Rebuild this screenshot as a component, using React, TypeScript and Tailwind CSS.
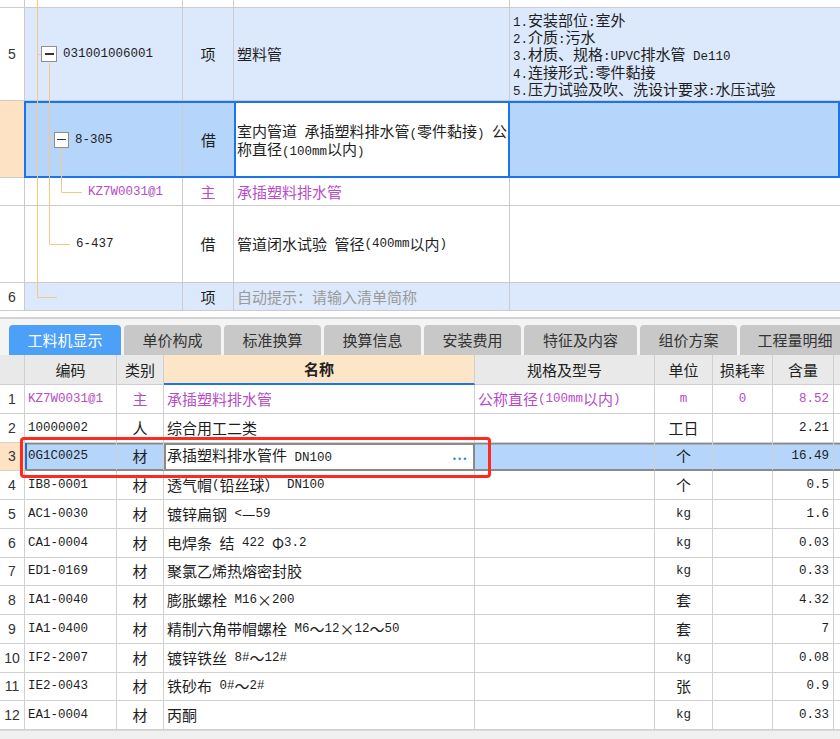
import React from "react";

function T({ s }: { s: string }) {
  const parts = s.split(/([\x20-\x7E]+)/).filter((p) => p.length > 0);
  return (
    <>
      {parts.map((p, i) =>
        /^[\x20-\x7E]+$/.test(p) ? (
          <span key={i} className="font-['Liberation_Mono',monospace] text-[12.5px] whitespace-pre">
            {p}
          </span>
        ) : (
          <span key={i}>{p}</span>
        )
      )}
    </>
  );
}

function Box({ size }: { size: "a" | "b" }) {
  return (
    <span
      className={
        (size === "a" ? "w-[16px] h-[16px] " : "w-[15px] h-[16px] ") +
        "shrink-0 border border-[#8e8e8e] bg-white flex items-center justify-center"
      }
    >
      <span className="w-[9px] h-[1.5px] bg-[#333]" />
    </span>
  );
}

type Row = {
  n: string;
  code: string;
  cat: string;
  name: string;
  spec?: string;
  unit: string;
  loss?: string;
  qty: string;
  purple?: boolean;
  sel?: boolean;
};

const rows: Row[] = [
  { n: "1", code: "KZ7W0031@1", cat: "主", name: "承插塑料排水管", spec: "公称直径(100mm以内)", unit: "m", loss: "0", qty: "8.52", purple: true },
  { n: "2", code: "10000002", cat: "人", name: "综合用工二类", unit: "工日", qty: "2.21" },
  { n: "3", code: "0G1C0025", cat: "材", name: "承插塑料排水管件 DN100", unit: "个", qty: "16.49", sel: true },
  { n: "4", code: "IB8-0001", cat: "材", name: "透气帽(铅丝球） DN100", unit: "个", qty: "0.5" },
  { n: "5", code: "AC1-0030", cat: "材", name: "镀锌扁钢 <—59", unit: "kg", qty: "1.6" },
  { n: "6", code: "CA1-0004", cat: "材", name: "电焊条 结 422 Φ3.2", unit: "kg", qty: "0.03" },
  { n: "7", code: "ED1-0169", cat: "材", name: "聚氯乙烯热熔密封胶", unit: "kg", qty: "0.33" },
  { n: "8", code: "IA1-0040", cat: "材", name: "膨胀螺栓 M16×200", unit: "套", qty: "4.32" },
  { n: "9", code: "IA1-0400", cat: "材", name: "精制六角带帽螺栓 M6～12×12～50", unit: "套", qty: "7" },
  { n: "10", code: "IF2-2007", cat: "材", name: "镀锌铁丝 8#～12#", unit: "kg", qty: "0.08" },
  { n: "11", code: "IE2-0043", cat: "材", name: "铁砂布 0#～2#", unit: "张", qty: "0.9" },
  { n: "12", code: "EA1-0004", cat: "材", name: "丙酮", unit: "kg", qty: "0.33" },
];

const tabs = [
  { t: "工料机显示", w: "w-[112px]" },
  { t: "单价构成", w: "w-[97px]" },
  { t: "标准换算", w: "w-[97px]" },
  { t: "换算信息", w: "w-[97px]" },
  { t: "安装费用", w: "w-[97px]" },
  { t: "特征及内容", w: "w-[113px]" },
  { t: "组价方案", w: "w-[97px]" },
  { t: "工程量明细", w: "w-[110px]" },
];

function BodyRow({ r }: { r: Row }) {
  const c = r.purple ? "text-[#b74cc8]" : "text-[#1e1e1e]";
  if (r.sel) {
    const sh = "shadow-[inset_0_1.5px_0_#8a8a8a] border-b-2 border-b-[#8a8a8a]";
    return (
      <div className="flex h-[28.75px]">
        <div className="w-[25px] shrink-0 border-r border-b border-[#d0d0d0] bg-[#fde3c3] flex items-center justify-center font-['Liberation_Sans',sans-serif] text-[14px] text-[#333]">
          {r.n}
        </div>
        <div className={"w-[92px] shrink-0 border-r border-[#d0d0d0] bg-[#b5d5fb] flex items-center pl-[3px] shadow-[inset_2px_0_0_#1b6fe2,inset_0_1.5px_0_#8a8a8a] border-b-2 border-b-[#8a8a8a]"}>
          <span className="font-['Liberation_Mono',monospace] text-[12.5px]">{r.code}</span>
        </div>
        <div className={"w-[47px] shrink-0 border-r border-r-[#d0d0d0] bg-[#b5d5fb] flex items-center justify-center " + sh}>{r.cat}</div>
        <div className="w-[311px] shrink-0 border-2 border-[#8a8a8a] bg-white flex items-center pl-[1px] pr-[5px]">
          <span className="flex-1 whitespace-nowrap">
            <T s={r.name} />
          </span>
          <span className="text-[#3f87d6] font-bold text-[13px] tracking-[1px] leading-none mb-[4px]">...</span>
        </div>
        <div className={"w-[180px] shrink-0 border-r border-r-[#d0d0d0] bg-[#b5d5fb] " + sh} />
        <div className={"w-[58px] shrink-0 border-r border-r-[#d0d0d0] bg-[#b5d5fb] flex items-center justify-center " + sh}>{r.unit}</div>
        <div className={"w-[60px] shrink-0 border-r border-r-[#d0d0d0] bg-[#b5d5fb] " + sh} />
        <div className={"w-[61px] shrink-0 border-r border-r-[#d0d0d0] bg-[#b5d5fb] flex items-center justify-end pr-[4px] " + sh}>
          <span className="font-['Liberation_Mono',monospace] text-[12.5px]">{r.qty}</span>
        </div>
        <div className={"flex-1 bg-[#b5d5fb] " + sh} />
      </div>
    );
  }
  return (
    <div className={"flex h-[28.75px] bg-white " + c}>
      <div className="w-[25px] shrink-0 border-r border-b border-[#d0d0d0] flex items-center justify-center font-['Liberation_Sans',sans-serif] text-[14px] text-[#333]">
        {r.n}
      </div>
      <div className="w-[92px] shrink-0 border-r border-b border-[#d0d0d0] flex items-center pl-[3px]">
        <span className="font-['Liberation_Mono',monospace] text-[12.5px]">{r.code}</span>
      </div>
      <div className="w-[47px] shrink-0 border-r border-b border-[#d0d0d0] flex items-center justify-center">{r.cat}</div>
      <div className="w-[311px] shrink-0 border-r border-b border-[#d0d0d0] flex items-center pl-[3px] whitespace-nowrap">
        <T s={r.name} />
      </div>
      <div className="w-[180px] shrink-0 border-r border-b border-[#d0d0d0] flex items-center pl-[3px] whitespace-nowrap">
        {r.spec ? <T s={r.spec} /> : null}
      </div>
      <div className="w-[58px] shrink-0 border-r border-b border-[#d0d0d0] flex items-center justify-center">
        <T s={r.unit} />
      </div>
      <div className="w-[60px] shrink-0 border-r border-b border-[#d0d0d0] flex items-center justify-center">
        {r.loss ? <span className="font-['Liberation_Mono',monospace] text-[12.5px]">{r.loss}</span> : null}
      </div>
      <div className="w-[61px] shrink-0 border-r border-b border-[#d0d0d0] flex items-center justify-end pr-[4px]">
        <span className="font-['Liberation_Mono',monospace] text-[12.5px]">{r.qty}</span>
      </div>
      <div className="flex-1 border-b border-[#d0d0d0]" />
    </div>
  );
}

function Line({ s }: { s: string }) {
  return (
    <div className="h-[17.3px] leading-[17.3px] whitespace-nowrap">
      <T s={s} />
    </div>
  );
}

export default function App() {
  return (
    <div className="relative w-[840px] h-[739px] overflow-hidden bg-white font-['Noto_Sans_CJK_SC',sans-serif] text-[15px] leading-[18px] text-[#1e1e1e]">
      {/* Top tree grid */}
      <div className="relative">
        <div className="flex h-[8px]">
          <div className="w-[25px] shrink-0 border-r border-b border-[#cbcbcb]" />
          <div className="w-[158px] shrink-0 border-r border-b border-[#cbcbcb]" />
          <div className="w-[51px] shrink-0 border-r border-b border-[#cbcbcb]" />
          <div className="w-[276px] shrink-0 border-r border-b border-[#cbcbcb]" />
          <div className="flex-1 border-b border-[#cbcbcb]" />
        </div>

        {/* row 5 */}
        <div className="flex h-[93px]">
          <div className="w-[25px] shrink-0 border-r border-b border-[#cbcbcb] flex items-center justify-center font-['Liberation_Sans',sans-serif] text-[14px] text-[#333]">
            5
          </div>
          <div className="w-[158px] shrink-0 border-r border-b border-[#cbcbcb] bg-[#dce8fb] flex items-center pl-[16px] gap-[6px]">
            <Box size="a" />
            <span className="font-['Liberation_Mono',monospace] text-[12.5px]">031001006001</span>
          </div>
          <div className="w-[51px] shrink-0 border-r border-b border-[#cbcbcb] bg-[#dce8fb] flex items-center justify-center">项</div>
          <div className="w-[276px] shrink-0 border-r border-b border-[#cbcbcb] bg-[#dce8fb] flex items-center pl-[3px]">塑料管</div>
          <div className="flex-1 border-b border-[#cbcbcb] bg-[#dce8fb] flex flex-col justify-center pl-[3px]">
            <Line s="1.安装部位:室外" />
            <Line s="2.介质:污水" />
            <Line s="3.材质、规格:UPVC排水管 De110" />
            <Line s="4.连接形式:零件黏接" />
            <Line s="5.压力试验及吹、洗设计要求:水压试验" />
          </div>
        </div>

        {/* row 8-305 selected */}
        <div className="flex h-[77px]">
          <div className="w-[25px] shrink-0 border-r border-b border-[#cbcbcb] bg-[#fde3c3]" />
          <div className="flex-1 flex border-2 border-[#1a74ef] -ml-[1px]">
            <div className="w-[157px] shrink-0 border-r border-[#cbcbcb] bg-[#b5d5fb] flex items-center pl-[28px] gap-[6px]">
              <Box size="b" />
              <span className="font-['Liberation_Mono',monospace] text-[12.5px]">8-305</span>
            </div>
            <div className="w-[51px] shrink-0 bg-[#b5d5fb] flex items-center justify-center">借</div>
            <div className="w-[276px] shrink-0 bg-white border-x-2 border-[#1a74ef] flex flex-col justify-center pl-[1px] overflow-hidden">
              <Line s="室内管道 承插塑料排水管(零件黏接) 公" />
              <Line s="称直径(100mm以内)" />
            </div>
            <div className="flex-1 bg-[#b5d5fb]" />
          </div>
        </div>

        {/* KZ row */}
        <div className="flex h-[28px] text-[#b74cc8]">
          <div className="w-[25px] shrink-0 border-r border-b border-[#cbcbcb]" />
          <div className="w-[158px] shrink-0 border-r border-b border-[#cbcbcb] flex items-center pl-[63px]">
            <span className="font-['Liberation_Mono',monospace] text-[12.5px]">KZ7W0031@1</span>
          </div>
          <div className="w-[51px] shrink-0 border-r border-b border-[#cbcbcb] flex items-center justify-center">主</div>
          <div className="w-[276px] shrink-0 border-r border-b border-[#cbcbcb] flex items-center pl-[3px]">承插塑料排水管</div>
          <div className="flex-1 border-b border-[#cbcbcb]" />
        </div>

        {/* 6-437 row */}
        <div className="flex h-[77px]">
          <div className="w-[25px] shrink-0 border-r border-b border-[#cbcbcb]" />
          <div className="w-[158px] shrink-0 border-r border-b border-[#cbcbcb] flex items-center pl-[51px]">
            <span className="font-['Liberation_Mono',monospace] text-[12.5px]">6-437</span>
          </div>
          <div className="w-[51px] shrink-0 border-r border-b border-[#cbcbcb] flex items-center justify-center">借</div>
          <div className="w-[276px] shrink-0 border-r border-b border-[#cbcbcb] flex items-center pl-[3px] whitespace-nowrap">
            <T s="管道闭水试验 管径(400mm以内)" />
          </div>
          <div className="flex-1 border-b border-[#cbcbcb]" />
        </div>

        {/* row 6 */}
        <div className="flex h-[28px]">
          <div className="w-[25px] shrink-0 border-r border-b border-[#cbcbcb] flex items-center justify-center font-['Liberation_Sans',sans-serif] text-[14px] text-[#333]">
            6
          </div>
          <div className="w-[158px] shrink-0 border-r border-b border-[#cbcbcb] bg-[#dce8fb]" />
          <div className="w-[51px] shrink-0 border-r border-b border-[#cbcbcb] bg-[#dce8fb] flex items-center justify-center">项</div>
          <div className="w-[276px] shrink-0 border-r border-b border-[#cbcbcb] bg-[#dce8fb] flex items-center pl-[3px] text-[#9a9a9a]">
            自动提示：请输入清单简称
          </div>
          <div className="flex-1 border-b border-[#cbcbcb] bg-[#dce8fb]" />
        </div>

        {/* tree connector lines */}
        <svg className="absolute left-0 top-0 pointer-events-none" width="200" height="311" viewBox="0 0 200 311">
          <g stroke="#f9c685" strokeWidth="1" fill="none">
            <path d="M37.5 0 V297.5 H57" />
            <path d="M37.5 54.5 H41" />
            <path d="M49.5 63 V244.5 H70" />
            <path d="M49.5 139.5 H54" />
            <path d="M61.5 148 V192.5 H82" />
          </g>
        </svg>
      </div>

      {/* gap */}
      <div className="h-[6px] bg-white" />

      {/* tab bar */}
      <div className="h-[38px] border-t-2 border-[#d3d3d3] bg-[#f4f4f4] flex items-end pl-[9px] gap-[3px]">
        {tabs.map((t, i) => (
          <div
            key={t.t}
            className={
              t.w +
              " shrink-0 h-[30px] rounded-t-[4px] flex items-center justify-center text-[15px] " +
              (i === 0 ? "bg-[#4ca0f7] text-white" : "bg-[#c8c8c8] text-[#333]")
            }
          >
            {t.t}
          </div>
        ))}
      </div>

      {/* header */}
      <div className="flex h-[30px] bg-[#e9e9e9] text-[#222]">
        <div className="w-[25px] shrink-0 border-r border-b border-[#cfcfcf]" />
        <div className="w-[92px] shrink-0 border-r border-b border-[#cfcfcf] flex items-center justify-center">编码</div>
        <div className="w-[47px] shrink-0 border-r border-b border-[#cfcfcf] flex items-center justify-center">类别</div>
        <div className="w-[311px] shrink-0 border-r border-r-[#cfcfcf] border-b-2 border-b-[#1a74ef] bg-[#fde6c8] flex items-center justify-center font-bold">
          名称
        </div>
        <div className="w-[180px] shrink-0 border-r border-b border-[#cfcfcf] flex items-center justify-center">规格及型号</div>
        <div className="w-[58px] shrink-0 border-r border-b border-[#cfcfcf] flex items-center justify-center">单位</div>
        <div className="w-[60px] shrink-0 border-r border-b border-[#cfcfcf] flex items-center justify-center">损耗率</div>
        <div className="w-[61px] shrink-0 border-r border-b border-[#cfcfcf] flex items-center justify-center">含量</div>
        <div className="flex-1 border-b border-[#cfcfcf]" />
      </div>

      {/* body */}
      <div>
        {rows.map((r) => (
          <BodyRow key={r.n} r={r} />
        ))}
      </div>

      <div className="h-[9px] bg-[#f0f0f0] border-t border-[#dadada]" />

      {/* red highlight */}
      <div className="absolute left-[20px] top-[437px] w-[471px] h-[41px] border-[3px] border-[#ff2a1f] rounded-[4px] pointer-events-none" />
    </div>
  );
}
